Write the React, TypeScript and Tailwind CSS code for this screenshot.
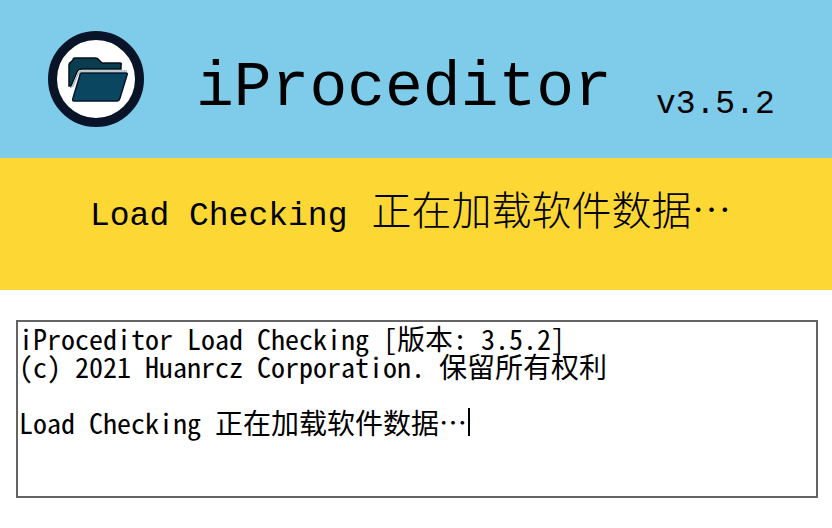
const log = `iProceditor Load Checking [版本: 3.5.2]
(c) 2021 Huanrcz Corporation. 保留所有权利

Load Checking 正在加载软件数据…`;

function Logo() {
  return (
    <svg viewBox="0 0 96 96" className="size-24 shrink-0" aria-hidden="true">
      <circle cx="48" cy="48" r="43.5" fill="#fff" stroke="#0a1428" strokeWidth="9" />
      <path
        d="M21 55V34q0-2 2-3l2-2q0-2 2-2h20q3 0 4 2l3 3h18q2 0 1 2v4H34q-4 0-5 3l-6 14z"
        fill="#0b3d50"
        stroke="#06101c"
        strokeWidth="1.5"
      />
      <path d="M33 42h45q2 0 1 2l-7 23q-1 3-3 3H26q-2 0-1-3l7-23q0-2 1-2z" fill="#0b4660" stroke="#07122e" strokeWidth="1.5" />
      <path d="M22 57l3-2 5-12q1-3 4-3h45" fill="none" stroke="#a3bcbd" strokeWidth="1.5" />
    </svg>
  );
}

export default function App() {
  return (
    <main className="min-h-screen bg-white font-['Liberation_Mono','Noto_Sans_CJK_SC',monospace] text-black">
      <header className="flex h-[158px] items-center bg-[#7ecbea] px-12">
        <Logo />
        <div className="ml-13 flex items-end gap-11 pt-5">
          <h1 className="text-[63px] leading-[72px]">iProceditor</h1>
          <span className="text-[33px] leading-10">v3.5.2</span>
        </div>
      </header>
      <section className="h-[132px] bg-[#fdd835] px-[90px] pt-7">
        <p className="flex items-baseline gap-6 whitespace-nowrap leading-[44px]">
          <span className="text-[33px]">Load Checking</span>
          <span className="font-['Noto_Sans_CJK_SC',sans-serif] text-[40px] font-light">正在加载软件数据…</span>
        </p>
      </section>
      <section className="pl-4 pr-3.5 pt-[30px]">
        <div className="relative">
          <textarea
            aria-label="Load log"
            readOnly
            defaultValue={log}
            className="block h-[178px] w-full resize-none overflow-hidden border-2 border-[#646464] bg-white pl-px pt-0.5 font-['Noto_Sans_Mono_CJK_SC','Noto_Sans_CJK_SC',monospace] text-[28px] leading-[28px] outline-none"
          />
          <span className="absolute left-[452px] top-[88px] h-7 w-0.5 bg-black" />
        </div>
      </section>
    </main>
  );
}
